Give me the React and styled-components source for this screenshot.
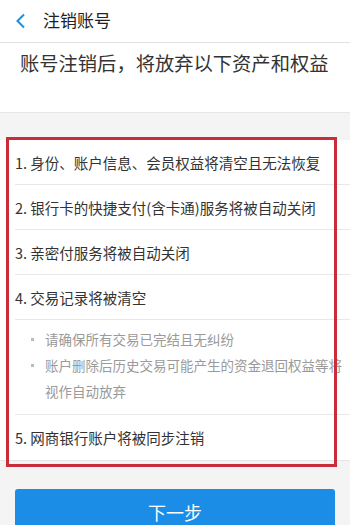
import React from "react";
import styled, { createGlobalStyle } from "styled-components";

const Global = createGlobalStyle`
  html, body { margin: 0; padding: 0; }
  body {
    width: 350px;
    height: 525px;
    overflow: hidden;
    background: #f4f4f4;
    font-family: "Noto Sans CJK SC", "Noto Sans", sans-serif;
    color: #333;
  }
`;

const Page = styled.div`
  width: 350px;
  height: 525px;
  overflow: hidden;
  background: #f4f4f4;
  display: flex;
  flex-direction: column;
  & > * { flex-shrink: 0; }
`;

const Header = styled.div`
  height: 42px;
  background: #fff;
  border-bottom: 1px solid #e2e2e2;
  display: flex;
  align-items: center;
  padding-left: 15px;
`;

const Back = styled.svg`
  width: 11px;
  height: 16px;
  margin-right: 17px;
`;

const Title = styled.div`
  font-size: 17px;
  color: #222;
  line-height: 1;
  margin-top: -4px;
`;

const Intro = styled.div`
  height: 70px;
  background: #fff;
  border-bottom: 1px solid #e6e6e6;
  padding: 5px 0 0 20px;
  box-sizing: border-box;
  font-size: 19.3px;
  line-height: 30px;
  color: #333;
  white-space: nowrap;
`;

const ListWrap = styled.div`
  position: relative;
  margin-top: 27px;
  background: #fff;
  border-bottom: 1px solid #e6e6e6;
`;

const Row = styled.div`
  height: 44px;
  margin-left: 15px;
  border-bottom: 1px solid ${(p) => (p.$last ? "transparent" : "#e8e8e8")};
  display: flex;
  align-items: center;
  font-size: 14.5px;
  color: #333;
  white-space: nowrap;
`;

const Bullets = styled.ul`
  list-style: none;
  margin: 0 0 0 15px;
  padding: 6px 4px 10px 0;
  border-bottom: 1px solid #e8e8e8;
`;

const Bullet = styled.li`
  position: relative;
  padding-left: 30px;
  font-size: 13.5px;
  line-height: 26px;
  color: #9a9a9a;
  &::before {
    content: "";
    position: absolute;
    left: 16px;
    top: 12px;
    width: 3px;
    height: 3px;
    background: #bbb;
  }
`;

const Highlight = styled.div`
  position: absolute;
  left: 6px;
  right: 13px;
  top: -3px;
  bottom: -7px;
  border: 3px solid #c92d3a;
  pointer-events: none;
`;

const Button = styled.div`
  margin: 28px 15px 0;
  height: 46px;
  border-radius: 3px;
  background: #1b8de6;
  color: #fff;
  font-size: 18px;
  display: flex;
  align-items: center;
  justify-content: center;
`;

const items = [
  "1. 身份、账户信息、会员权益将清空且无法恢复",
  "2. 银行卡的快捷支付(含卡通)服务将被自动关闭",
  "3. 亲密付服务将被自动关闭",
  "4. 交易记录将被清空",
];

export default function App() {
  return (
    <Page>
      <Global />
      <Header>
        <Back viewBox="0 0 11 16">
          <path d="M9 1.5 L2.5 8 L9 14.5" fill="none" stroke="#1a8ee0" strokeWidth="2" />
        </Back>
        <Title>注销账号</Title>
      </Header>
      <Intro>账号注销后，将放弃以下资产和权益</Intro>
      <ListWrap>
        {items.map((t) => (
          <Row key={t}>{t}</Row>
        ))}
        <Bullets>
          <Bullet>请确保所有交易已完结且无纠纷</Bullet>
          <Bullet>账户删除后历史交易可能产生的资金退回权益等将视作自动放弃</Bullet>
        </Bullets>
        <Row $last>5. 网商银行账户将被同步注销</Row>
        <Highlight />
      </ListWrap>
      <Button>下一步</Button>
    </Page>
  );
}
